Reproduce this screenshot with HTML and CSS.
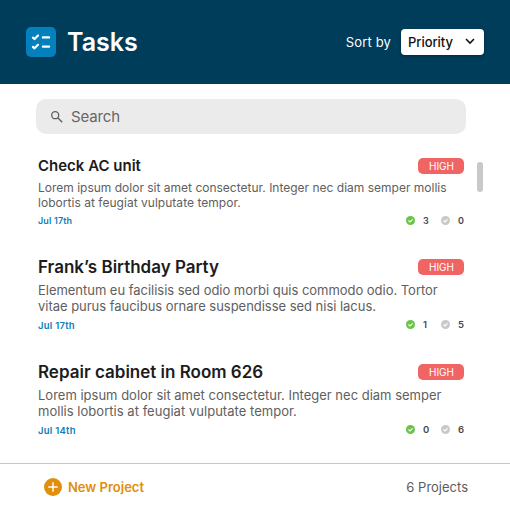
FILE: index.html
```html
<!DOCTYPE html>
<html lang="en">
<head>
<meta charset="utf-8">
<title>Tasks</title>
<link rel="stylesheet" href="styles.css">
</head>
<body>
<svg class="sprite" aria-hidden="true">
  <symbol id="check" viewBox="0 0 9 9">
    <circle cx="4.5" cy="4.5" r="4.5" fill="currentColor"/>
    <path d="M2.5 4.5 4 6 6.6 3.3" fill="none" stroke="#fff" stroke-width="1.1"/>
  </symbol>
</svg>
<div class="app">
  <header class="header">
    <svg class="logo" viewBox="0 0 30 30">
      <rect width="30" height="30" rx="5" fill="#0480bd"/>
      <g fill="none" stroke="#fff" stroke-linecap="round" stroke-linejoin="round">
        <path d="M6.9 10.6 8.5 12 12 8.5M6.9 19.9 8.5 21.3 12 17.8" stroke-width="2.2"/>
        <path d="M17 10.4H23M17 19.6H23" stroke-width="2.4"/>
      </g>
    </svg>
    <h1 class="heading">Tasks</h1>
    <span class="sort-label">Sort by</span>
    <button class="select"><span class="select-text">Priority</span>
      <svg class="chevron" viewBox="0 0 10 7"><path d="M1 1 5 5.1 9 1" fill="none" stroke="#111" stroke-width="1.5"/></svg>
    </button>
  </header>
  <main class="main">
    <div class="search">
      <svg class="search-icon" viewBox="0 0 12 12"><g fill="none" stroke="#5c5c5c" stroke-width="1.3"><circle cx="4.2" cy="4.2" r="3.5"/><path d="M6.8 6.8 11.2 11.2"/></g></svg>
      <span class="search-text">Search</span>
    </div>
    <div class="list">
      <div class="tasks">
        <article class="task compact">
          <div class="row"><h2 class="title">Check AC unit</h2><span class="badge">HIGH</span></div>
          <p class="desc">Lorem ipsum dolor sit amet consectetur. Integer nec diam semper mollis<br><span class="line-end">lobortis at feugiat vulputate tempor.</span></p>
          <div class="meta"><span class="date">Jul 17th</span><svg class="tick done"><use href="#check"/></svg><span class="count">3</span><svg class="tick"><use href="#check"/></svg><span class="count last">0</span></div>
        </article>
        <article class="task">
          <div class="row"><h2 class="title">Frank’s Birthday Party</h2><span class="badge">HIGH</span></div>
          <p class="desc tight">Elementum eu facilisis sed odio morbi quis commodo odio. Tortor<br>vitae purus faucibus ornare suspendisse sed nisi lacus.</p>
          <div class="meta"><span class="date">Jul 17th</span><svg class="tick done"><use href="#check"/></svg><span class="count">1</span><svg class="tick"><use href="#check"/></svg><span class="count last">5</span></div>
        </article>
        <article class="task">
          <div class="row"><h2 class="title">Repair cabinet in Room 626</h2><span class="badge">HIGH</span></div>
          <p class="desc">Lorem ipsum dolor sit amet consectetur. Integer nec diam semper<br><span class="line-end">mollis lobortis at feugiat vulputate tempor.</span></p>
          <div class="meta"><span class="date">Jul 14th</span><svg class="tick done"><use href="#check"/></svg><span class="count">0</span><svg class="tick"><use href="#check"/></svg><span class="count last">6</span></div>
        </article>
      </div>
      <div class="scrollbar"></div>
    </div>
  </main>
  <footer class="footer">
    <svg class="plus" viewBox="0 0 18 18"><circle cx="9" cy="9" r="9" fill="#e08e0b"/><path d="M9 4.2V13.8M4.2 9H13.8" stroke="#fff" stroke-width="1.4"/></svg>
    <span class="new">New Project</span>
    <span class="total">6 Projects</span>
  </footer>
</div>
</body>
</html>
```

FILE: styles.css
```css
* { box-sizing: border-box; }
body { margin: 0; background: #fff; font-family: Inter, "Liberation Sans", sans-serif; }
h1, h2, p { margin: 0; }
.sprite { display: none; }
.app { width: 510px; height: 510px; display: flex; flex-direction: column; overflow: hidden; }

.header { height: 84px; flex: none; display: flex; align-items: center; padding: 0 26px; background: #003d5b; color: #fff; }
.logo { width: 30px; height: 30px; }
.heading { margin-left: 11px; font-size: 25px; font-weight: 600; line-height: 32px; }
.sort-label { margin-left: auto; margin-right: 10px; font-size: 13px; letter-spacing: 0.15px; }
.select { width: 83px; height: 26px; display: flex; align-items: center; justify-content: space-between; padding: 0 9px 0 7px; border: 0; border-radius: 4px; background: #fff; color: #111; font: 500 13px Inter, sans-serif; letter-spacing: -0.05px; box-shadow: 0 1px 3px rgba(0, 0, 0, 0.35); }
.chevron { width: 10px; height: 7px; margin-top: -1px; }

.main { flex: none; height: 379px; padding-top: 15px; }
.search { width: 430px; height: 35px; margin-left: 36px; display: flex; align-items: center; padding-left: 15px; gap: 8px; border-radius: 10px; background: #ebebeb; }
.search-icon { width: 12px; height: 12px; }
.search-text { font-size: 15px; letter-spacing: -0.15px; color: #666; }

.list { display: flex; padding: 22px 0 0 38px; }
.tasks { width: 426px; }
.scrollbar { width: 6px; height: 30px; margin: 6px 0 0 13px; border-radius: 3px; background: #c9c9c9; }
.task { height: 105px; }
.row { height: 20px; display: flex; align-items: center; justify-content: space-between; }
.title { font-size: 17px; font-weight: 600; line-height: 20px; color: #1c1c1c; white-space: nowrap; }
.desc { margin-top: 5px; font-size: 13px; line-height: 16px; color: #606060; white-space: nowrap; }
.tight { letter-spacing: -0.03px; }
.line-end { letter-spacing: 0.03px; }
.badge { width: 46px; height: 16px; padding-left: 1px; border-radius: 5px; background: #f06463; color: #fff; font-size: 10px; line-height: 17px; text-align: center; }
.meta { height: 12px; margin-top: 5px; display: flex; align-items: center; font-size: 9.5px; font-weight: 600; line-height: 12px; }
.date { margin-right: auto; padding-top: 1px; letter-spacing: 0.25px; color: #0b80b8; }
.tick { width: 9px; height: 9px; margin-bottom: 1px; color: #c9c9c9; }
.tick.done { color: #6ac44a; }
.count { width: 26px; padding-left: 8px; color: #484848; }
.count.last { width: 14px; padding-left: 0; text-align: right; }

.compact { height: 101px; }
.compact .title { font-size: 15px; }
.compact .desc { margin-top: 4px; font-size: 12px; line-height: 15px; }
.compact .meta { margin-top: 5px; font-size: 9px; }
.compact .date { padding-top: 0; letter-spacing: 0.15px; }

.footer { height: 47px; display: flex; align-items: center; padding: 0 42px 0 44px; border-top: 1px solid #c8c8c8; }
.plus { width: 18px; height: 18px; margin-right: 6px; }
.new { font-size: 13px; font-weight: 600; color: #e08e0b; }
.total { margin-left: auto; font-size: 13px; color: #5c5c5c; }
```
